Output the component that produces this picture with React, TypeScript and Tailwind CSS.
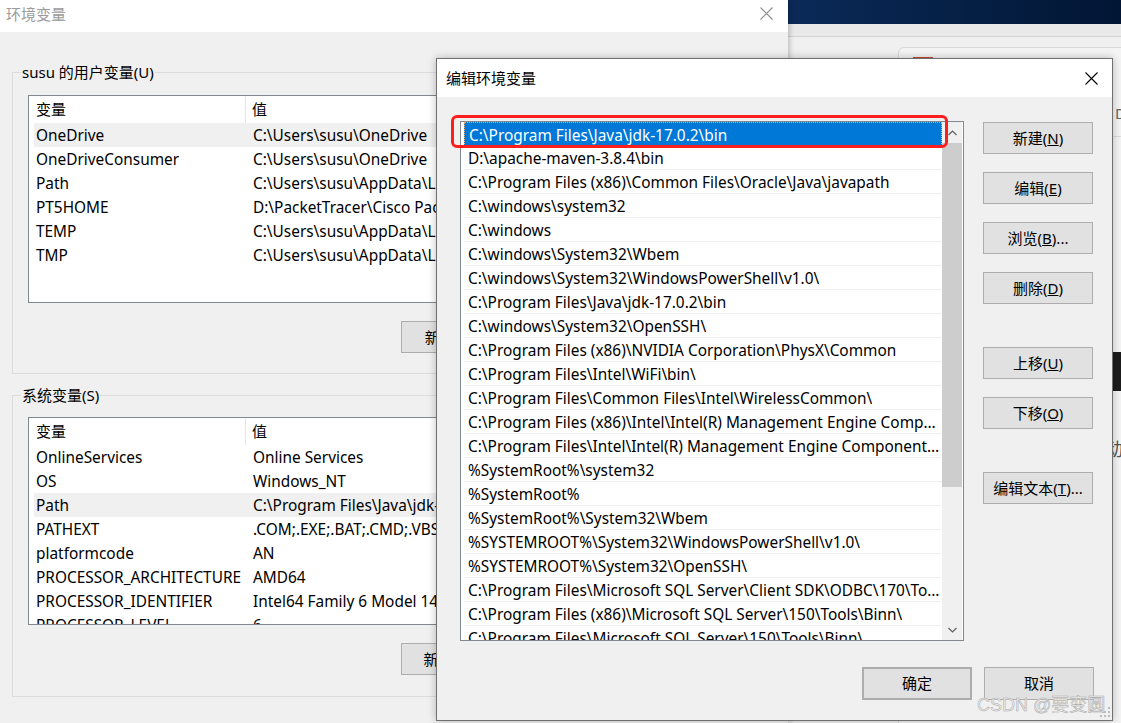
import React from 'react'

const userVars: [string, string][] = [
  ['OneDrive', 'C:\\Users\\susu\\OneDrive'],
  ['OneDriveConsumer', 'C:\\Users\\susu\\OneDrive'],
  ['Path', 'C:\\Users\\susu\\AppData\\Local\\Microsoft\\WindowsApps;'],
  ['PT5HOME', 'D:\\PacketTracer\\Cisco Packet Tracer 8.0'],
  ['TEMP', 'C:\\Users\\susu\\AppData\\Local\\Temp'],
  ['TMP', 'C:\\Users\\susu\\AppData\\Local\\Temp'],
]

const sysVars: [string, string][] = [
  ['OnlineServices', 'Online Services'],
  ['OS', 'Windows_NT'],
  ['Path', 'C:\\Program Files\\Java\\jdk-17.0.2\\bin;D:\\apache-maven-3.8.4\\bin'],
  ['PATHEXT', '.COM;.EXE;.BAT;.CMD;.VBS;.VBE;.JS;.JSE;.WSF;.WSH;.MSC'],
  ['platformcode', 'AN'],
  ['PROCESSOR_ARCHITECTURE', 'AMD64'],
  ['PROCESSOR_IDENTIFIER', 'Intel64 Family 6 Model 140 Stepping 1'],
  ['PROCESSOR_LEVEL', '6'],
]

const paths = [
  'C:\\Program Files\\Java\\jdk-17.0.2\\bin',
  'D:\\apache-maven-3.8.4\\bin',
  'C:\\Program Files (x86)\\Common Files\\Oracle\\Java\\javapath',
  'C:\\windows\\system32',
  'C:\\windows',
  'C:\\windows\\System32\\Wbem',
  'C:\\windows\\System32\\WindowsPowerShell\\v1.0\\',
  'C:\\Program Files\\Java\\jdk-17.0.2\\bin',
  'C:\\windows\\System32\\OpenSSH\\',
  'C:\\Program Files (x86)\\NVIDIA Corporation\\PhysX\\Common',
  'C:\\Program Files\\Intel\\WiFi\\bin\\',
  'C:\\Program Files\\Common Files\\Intel\\WirelessCommon\\',
  'C:\\Program Files (x86)\\Intel\\Intel(R) Management Engine Components\\DAL',
  'C:\\Program Files\\Intel\\Intel(R) Management Engine Components\\DAL',
  '%SystemRoot%\\system32',
  '%SystemRoot%',
  '%SystemRoot%\\System32\\Wbem',
  '%SYSTEMROOT%\\System32\\WindowsPowerShell\\v1.0\\',
  '%SYSTEMROOT%\\System32\\OpenSSH\\',
  'C:\\Program Files\\Microsoft SQL Server\\Client SDK\\ODBC\\170\\Tools\\Binn\\',
  'C:\\Program Files (x86)\\Microsoft SQL Server\\150\\Tools\\Binn\\',
  'C:\\Program Files\\Microsoft SQL Server\\150\\Tools\\Binn\\',
]

function CloseIcon({ className }: { className?: string }) {
  return (
    <svg width="13" height="13" viewBox="0 0 13 13" className={className}>
      <path d="M0.5 0.5L12.5 12.5M12.5 0.5L0.5 12.5" stroke="currentColor" strokeWidth="1.1" fill="none" />
    </svg>
  )
}

function Btn({ children, className = '' }: { children: React.ReactNode; className?: string }) {
  return (
    <div className={`w-[110px] h-[32px] shrink-0 flex items-center justify-center bg-[#e1e1e1] border border-[#adadad] text-[15px] text-black ${className}`}>
      {children}
    </div>
  )
}

function VarTable({ rows, hl, h }: { rows: [string, string][]; hl: number; h: string }) {
  return (
    <div className={`w-[732px] ${h} border border-[#828790] bg-white overflow-hidden`}>
      <div className="h-[27px] flex items-center text-[15px]">
        <div className="w-[217px] h-full pl-[7px] flex items-center border-r border-[#e5e5e5]">变量</div>
        <div className="pl-[6px]">值</div>
      </div>
      {rows.map(([k, v], i) => (
        <div key={i} className={`ml-[5px] h-[24px] pt-[2px] flex items-center text-[15.4px] whitespace-nowrap ${i === hl ? 'bg-[#f0f0f0]' : ''}`}>
          <div className="w-[219px] pl-[2px]">{k}</div>
          <div>{v}</div>
        </div>
      ))}
    </div>
  )
}

function GroupBox({ label, children, className = '' }: { label: string; children: React.ReactNode; className?: string }) {
  return (
    <div className={`relative w-[765px] border border-[#dcdcdc] pl-[15px] ${className}`}>
      <span className="absolute left-[8px] top-[-12px] px-[1px] bg-[#f0f0f0] text-[15px] leading-[22px] text-black">{label}</span>
      {children}
    </div>
  )
}

function Chevron({ up }: { up?: boolean }) {
  return (
    <svg width="9" height="6" viewBox="0 0 9 6">
      <path d={up ? 'M0.5 5L4.5 1L8.5 5' : 'M0.5 1L4.5 5L8.5 1'} stroke="#606060" strokeWidth="1.2" fill="none" />
    </svg>
  )
}

export default function App() {
  return (
    <div className="relative w-[1121px] h-[723px] overflow-hidden bg-[#f0f0f0] text-black font-['Noto_Sans','Noto_Sans_CJK_SC',sans-serif]">
      {/* desktop behind */}
      <div className="absolute left-[788px] top-0 right-0 h-[24px] bg-gradient-to-r from-[#0b2a58] to-[#021634]" />
      <div className="absolute left-[788px] top-[24px] right-0 h-[13px] bg-[#e9e9e9] border-b border-[#d4d4d4]" />
      <div className="absolute left-[898px] top-[47px] w-[260px] h-[700px] rounded-tl-[6px] bg-[#f4f4f4] border border-[#d8d8d8]">
        <div className="absolute left-[14px] top-[9px] w-[20px] h-[5px] bg-[#c4462a]" />
        <div className="absolute left-[216px] top-[54px] text-[15px] text-[#666]">DU</div>
        <div className="absolute left-[214px] top-[88px] w-[40px] h-px bg-[#dcdcdc]" />
        <div className="absolute left-[214px] top-[304px] w-[40px] h-[39px] bg-[#1c1c1c]" />
        <div className="absolute left-[206px] top-[388px] text-[18px] text-[#555]">动</div>
      </div>

      {/* background window: 环境变量 */}
      <div className="absolute left-0 top-0 w-[788px] h-[723px] bg-[#f0f0f0] flex flex-col shadow-[2px_0_5px_rgba(0,0,0,0.2)]">
        <div className="h-[32px] shrink-0 bg-white flex items-center justify-between pl-[6px] pr-[15px]">
          <span className="text-[15px] text-[#9b9b9b] leading-none -mt-[4px]">环境变量</span>
          <CloseIcon className="text-[#8c8c8c] -mt-[6px]" />
        </div>
        <div className="flex flex-col pl-[12px]">
          <GroupBox label="susu 的用户变量(U)" className="mt-[40px] h-[302px] pt-[22px]">
            <VarTable rows={userVars} hl={0} h="h-[208px]" />
            <div className="flex gap-[10px] mt-[18px] pl-[373px]">
              <Btn>新建(<span className="underline">N</span>)...</Btn>
              <Btn>编辑(<span className="underline">E</span>)...</Btn>
              <Btn>删除(<span className="underline">D</span>)</Btn>
            </div>
          </GroupBox>
          <GroupBox label="系统变量(S)" className="mt-[21px] h-[302px] pt-[21px]">
            <VarTable rows={sysVars} hl={2} h="h-[208px]" />
            <div className="flex gap-[10px] mt-[18px] pl-[373px]">
              <Btn>新建(<span className="underline">W</span>)...</Btn>
              <Btn>编辑(<span className="underline">I</span>)...</Btn>
              <Btn>删除(<span className="underline">L</span>)</Btn>
            </div>
          </GroupBox>
        </div>
      </div>

      {/* dialog: 编辑环境变量 */}
      <div className="absolute left-[436px] top-[58px] w-[677px] h-[663px] border border-[#707070] bg-[#f0f0f0] flex flex-col shadow-[0_0_8px_rgba(0,0,0,0.25)]">
        <div className="h-[38px] shrink-0 bg-white flex items-center justify-between pl-[9px] pr-[14px]">
          <span className="text-[15px]">编辑环境变量</span>
          <CloseIcon />
        </div>
        <div className="flex pl-[23px] pt-[24px] gap-[19px]">
          <div className="w-[504px] h-[520px] border border-[#828790] bg-white flex overflow-hidden">
            <div className="w-[481px] pl-[3px] flex flex-col">
              {paths.map((p, i) => (
                <div
                  key={i}
                  className={`h-[24px] shrink-0 flex items-center pl-[4px] pr-[2px] pt-[3px] text-[15.4px] whitespace-nowrap overflow-hidden ${
                    i === 0 ? 'bg-[#0078d7] text-white border border-dotted border-[#f0a868]' : 'border-b border-[#eeeeee]'
                  }`}
                >
                  <span className="truncate">{p}</span>
                </div>
              ))}
            </div>
            <div className="w-[20px] bg-[#f0f0f0] flex flex-col">
              <div className="h-[21px] flex items-center justify-center">
                <Chevron up />
              </div>
              <div className="h-[344px] bg-[#cdcdcd]" />
              <div className="flex-1" />
              <div className="h-[21px] flex items-center justify-center">
                <Chevron />
              </div>
            </div>
          </div>
          <div className="flex flex-col pt-[1px]">
            <Btn>新建(<span className="underline">N</span>)</Btn>
            <Btn className="mt-[18px]">编辑(<span className="underline">E</span>)</Btn>
            <Btn className="mt-[18px]">浏览(<span className="underline">B</span>)...</Btn>
            <Btn className="mt-[18px]">删除(<span className="underline">D</span>)</Btn>
            <Btn className="mt-[43px]">上移(<span className="underline">U</span>)</Btn>
            <Btn className="mt-[18px]">下移(<span className="underline">O</span>)</Btn>
            <Btn className="mt-[43px]">编辑文本(<span className="underline">T</span>)...</Btn>
          </div>
        </div>
        <div className="flex justify-end gap-[12px] pr-[18px] mt-[26px]">
          <Btn className="border-2 border-[#0078d7] h-[33px]">确定</Btn>
          <Btn className="h-[33px]">取消</Btn>
        </div>
      </div>

      {/* red annotation around the selected path */}
      <div className="absolute left-[451px] top-[115px] w-[497px] h-[33px] border-[3px] border-[#ff1e1e] rounded-[6px]" />

      {/* watermark */}
      <div className="absolute left-[977px] top-[694px] text-[18px] leading-[22px] text-[#efefef] [-webkit-text-stroke:0.5px_#a8a8a8] font-['Liberation_Sans','Noto_Sans_CJK_SC',sans-serif]">
        CSDN @要变圆
      </div>
      <svg className="absolute left-[1100px] top-[707px]" width="12" height="12" viewBox="0 0 12 12">
        <rect x="8" y="0" width="2" height="2" fill="#bdbdbd" />
        <rect x="4" y="4" width="2" height="2" fill="#bdbdbd" />
        <rect x="8" y="4" width="2" height="2" fill="#bdbdbd" />
        <rect x="0" y="8" width="2" height="2" fill="#bdbdbd" />
        <rect x="4" y="8" width="2" height="2" fill="#bdbdbd" />
        <rect x="8" y="8" width="2" height="2" fill="#bdbdbd" />
      </svg>
    </div>
  )
}
